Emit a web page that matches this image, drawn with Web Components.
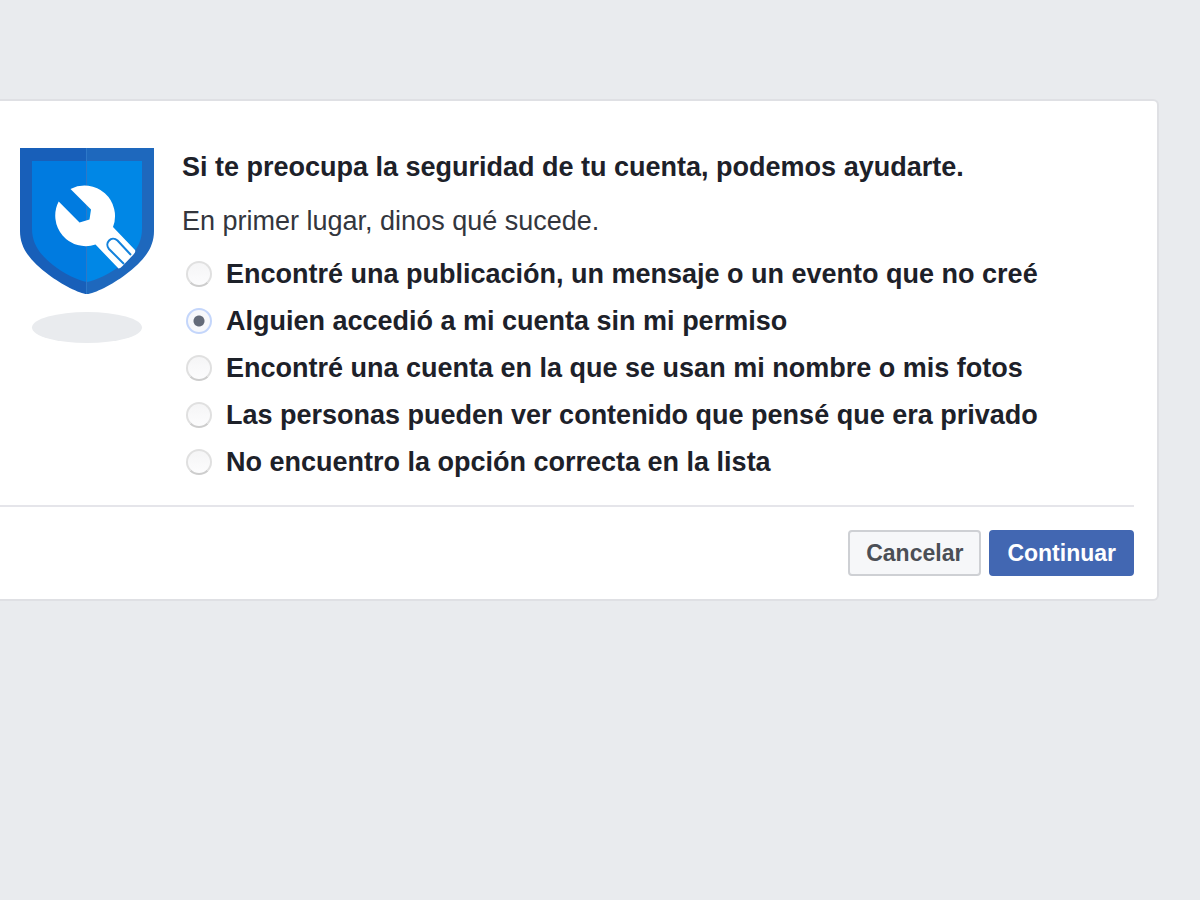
<!DOCTYPE html>
<html lang="es">
<head>
<meta charset="utf-8">
<meta name="viewport" content="width=device-width, initial-scale=1">
<title>Seguridad de la cuenta</title>
<style>
  body {
    margin: 0;
    min-height: 100vh;
    background-color: #e9ebee;
    color: #1d2129;
    font-family: "Liberation Sans", Arial, sans-serif;
    font-size: 27px;
  }
</style>
</head>
<body>
<security-page></security-page>

<script>
customElements.define('shield-icon', class ShieldIcon extends HTMLElement {
  constructor() {
    super();
    this.attachShadow({ mode: 'open' });
  }

  connectedCallback() {
    this.shadowRoot.innerHTML = `
<style>
  :host {
    display: block;
    width: 134px;
  }

  svg {
    display: block;
    width: 100%;
  }
</style>

<svg viewBox="0 0 134 196" aria-hidden="true">
  <path fill="#185fb9" d="M0 0H67V146C60 146 41 136 29 127C10 113 0 100 0 83Z"/>
  <path fill="#1e68bd" d="M67 0H134V83C134 100 124 113 105 127C93 136 74 146 67 146Z"/>
  <path fill="#007be0" d="M12 13H67V134C59 133 43 125 33 117C19 106 12 95 12 81Z"/>
  <path fill="#0087e6" d="M67 13H122V81C122 95 115 106 101 117C91 125 75 133 67 134Z"/>
  <path stroke="#2d78c8" d="M66.500 0V146"/>
  <path fill="#fff" d="M50.500 41L71 61.500L69.500 71.500L59.500 74.500L38.700 53.500A30.500 30.500 0 0 0 75.500 96.500L98.500 120.500Q100 120.500 102.500 118L113.500 106.500Q116 104 115 102L93 79A30.500 30.500 0 0 0 50.500 41Z"/>
  <path fill="none" stroke="#1382dc" stroke-width="2" d="M104 116L89 101C84 95 91.500 87 97.500 92.500L111 107"/>
  <ellipse cx="67" cy="179.500" rx="55" ry="15.500" fill="#e9ebee"/>
</svg>
    `;
  }
});

customElements.define('dialog-card', class DialogCard extends HTMLElement {
  constructor() {
    super();
    this.attachShadow({ mode: 'open' });
  }

  connectedCallback() {
    this.shadowRoot.innerHTML = `
<style>
  :host {
    display: block;
    background-color: white;
    border: 2px solid #dfe0e4;
    border-left: 0;
    border-radius: 0 6px 6px 0;
    padding: 47px 23px 23px 0;
  }

  .content {
    display: flex;
    align-items: flex-start;
    gap: 28px;
    padding-left: 20px;
  }

  .body {
    flex: 1;
    min-width: 0;
  }

  footer {
    display: flex;
    justify-content: flex-end;
    gap: 8px;
    margin-top: 27px;
    padding-top: 23px;
    border-top: 2px solid #e5e5ea;
  }
</style>

<div class="content">
  <slot name="icon"></slot>
  <div class="body"><slot></slot></div>
</div>
<footer><slot name="actions"></slot></footer>
    `;
  }
});

// radios only form a group inside one tree, so the whole list is one element
customElements.define('option-list', class OptionList extends HTMLElement {
  constructor() {
    super();
    this.attachShadow({ mode: 'open' });
  }

  connectedCallback() {
    this.shadowRoot.innerHTML = `
<style>
  :host {
    display: block;
  }

  fieldset {
    display: grid;
    gap: 15px;
    margin: 0;
    padding: 0 0 0 4px;
    border: 0;
  }

  .option {
    display: flex;
    align-items: center;
    gap: 14px;
    line-height: 32px;
    font-weight: bold;
  }

  input {
    appearance: none;
    flex: none;
    box-sizing: border-box;
    width: 26px;
    height: 26px;
    margin: 0;
    border: 2px solid #e0e0e0;
    border-bottom-color: #cdcdcd;
    border-radius: 50%;
    background: linear-gradient(#f5f5f6, #fcfcfd);
  }

  input:checked {
    border-color: #c4d6fb;
    background: radial-gradient(circle, #646b79 5px, #f7f8fb 6px);
  }
</style>

<fieldset aria-label="${this.getAttribute('label')}"></fieldset>
    `;

    const fieldset = this.shadowRoot.querySelector('fieldset');
    const selected = Number(this.getAttribute('selected'));

    this.getAttribute('options').split('|').forEach((text, i) => {
      const row = document.createElement('div');
      row.className = 'option';
      row.innerHTML = `<input type="radio" name="reason" id="reason-${i}" value="${i}"><label for="reason-${i}"></label>`;
      row.querySelector('label').textContent = text;
      row.querySelector('input').checked = i === selected;
      fieldset.append(row);
    });
  }
});

customElements.define('action-button', class ActionButton extends HTMLElement {
  constructor() {
    super();
    this.attachShadow({ mode: 'open' });
  }

  connectedCallback() {
    this.shadowRoot.innerHTML = `
<style>
  :host {
    display: block;
  }

  button {
    display: block;
    padding: 0 16px;
    border: 2px solid #ced0d4;
    border-radius: 4px;
    background-color: #f6f7f9;
    color: #4b4f56;
    font: bold 23px/42px "Liberation Sans", Arial, sans-serif;
    cursor: pointer;
  }

  :host([primary]) button {
    border-color: #4267b2;
    background-color: #4267b2;
    color: white;
  }
</style>

<button type="button"><slot></slot></button>
    `;
  }
});

customElements.define('security-page', class SecurityPage extends HTMLElement {
  constructor() {
    super();
    this.attachShadow({ mode: 'open' });
  }

  connectedCallback() {
    this.shadowRoot.innerHTML = `
<style>
  :host {
    display: block;
    padding: 99px 41px 40px 0;
  }

  h1,
  p {
    margin: 0;
    font-size: 27px;
    line-height: 38px;
  }

  p {
    margin: 16px 0 18px;
    color: #33363d;
  }
</style>

<main>
  <dialog-card>
    <shield-icon slot="icon"></shield-icon>
    <h1>Si te preocupa la seguridad de tu cuenta, podemos ayudarte.</h1>
    <p>En primer lugar, dinos qué sucede.</p>
    <option-list
      label="¿Qué sucede?"
      selected="1"
      options="Encontré una publicación, un mensaje o un evento que no creé|Alguien accedió a mi cuenta sin mi permiso|Encontré una cuenta en la que se usan mi nombre o mis fotos|Las personas pueden ver contenido que pensé que era privado|No encuentro la opción correcta en la lista"></option-list>
    <action-button slot="actions">Cancelar</action-button>
    <action-button slot="actions" primary>Continuar</action-button>
  </dialog-card>
</main>
    `;
  }
});
</script>
</body>
</html>
